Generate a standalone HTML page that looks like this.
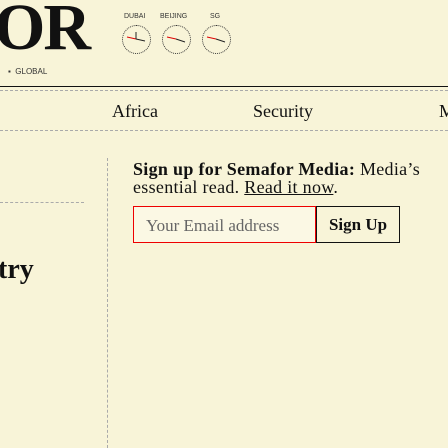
<!DOCTYPE html><html><head><style>
body{margin:0;width:448px;height:448px;background:#f8f4d8;position:relative;overflow:hidden;font-family:"Liberation Serif",serif;color:#111}
.a{position:absolute;line-height:1}
.lab{font:7px "Liberation Sans",sans-serif;color:#333}
.clk{width:27px;height:27px;border:1px dotted #333;border-radius:50%}
</style></head><body>
<div class="a" style="left:-6px;top:-5px;font-size:66px;font-weight:bold;letter-spacing:-2px">OR</div>
<div class="a lab" style="left:124px;top:13px">DUBAI</div>
<div class="a lab" style="left:160px;top:13px">BEIJING</div>
<div class="a lab" style="left:210px;top:13px">SG</div>
<div class="a clk" style="left:122px;top:25px"><svg width="27" height="27"><line x1="13" y1="13" x2="4" y2="11" stroke="#d00"/><line x1="13" y1="13" x2="13" y2="6" stroke="#222"/><line x1="13" y1="13" x2="22" y2="15" stroke="#222"/></svg></div>
<div class="a clk" style="left:162px;top:25px"><svg width="27" height="27"><line x1="13" y1="13" x2="4" y2="11" stroke="#d00"/><line x1="13" y1="13" x2="22" y2="16" stroke="#222"/></svg></div>
<div class="a clk" style="left:202px;top:25px"><svg width="27" height="27"><line x1="13" y1="13" x2="4" y2="11" stroke="#d00"/><line x1="13" y1="13" x2="22" y2="16" stroke="#222"/></svg></div>
<div class="a" style="left:8px;top:67px;font:8px 'Liberation Sans',sans-serif;color:#333">▪&nbsp; GLOBAL</div>
<div class="a" style="left:0;top:86px;width:448px;border-top:1px solid #111"></div>
<div class="a" style="left:0;top:90px;width:448px;border-top:1px dashed #aaa"></div>
<div class="a" style="left:112px;top:102px;font-size:18px">Africa</div>
<div class="a" style="left:253px;top:102px;font-size:18px">Security</div>
<div class="a" style="left:439px;top:102px;font-size:18px">M</div>
<div class="a" style="left:0;top:130px;width:448px;border-top:1px dashed #aaa"></div>
<div class="a" style="left:107px;top:158px;height:290px;border-left:1px dashed #aaa"></div>
<div class="a" style="left:0;top:202px;width:84px;border-top:1px dashed #aaa"></div>
<div class="a" style="left:-2px;top:256px;font-size:28px;font-weight:bold">try</div>
<div class="a" style="left:133px;top:160px;font-size:18px;line-height:18px;width:300px;letter-spacing:0.3px"><b>Sign up for Semafor Media:</b> Media’s<br>essential read. <u>Read it now</u>.</div>
<div class="a" style="left:133px;top:206px;width:183px;height:37px;border:1px solid #e00;background:#fbf8e4;box-sizing:border-box"><div style="margin:10px 0 0 12px;font-size:17px;color:#666">Your Email address</div></div>
<div class="a" style="left:316px;top:206px;width:84px;height:37px;border:1px solid #111;box-sizing:border-box;font-size:17px;font-weight:bold;text-align:center;line-height:35px">Sign Up</div>
</body></html>
